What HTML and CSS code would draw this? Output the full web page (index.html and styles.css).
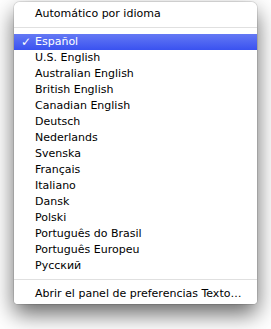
FILE: index.html
```html
<!DOCTYPE html>
<html lang="es">
    <head>
        <meta charset="UTF-8" />
        <title>Idioma</title>
        <link rel="stylesheet" href="styles.css">
    </head>
    <body>
        <div class="menu">
            <div class="menu-item">Automático por idioma</div>
            <div class="separator"></div>
            <div class="menu-item selected"><span class="check">✓</span>Español</div>
            <div class="menu-item">U.S. English</div>
            <div class="menu-item">Australian English</div>
            <div class="menu-item">British English</div>
            <div class="menu-item">Canadian English</div>
            <div class="menu-item">Deutsch</div>
            <div class="menu-item">Nederlands</div>
            <div class="menu-item">Svenska</div>
            <div class="menu-item">Français</div>
            <div class="menu-item">Italiano</div>
            <div class="menu-item">Dansk</div>
            <div class="menu-item">Polski</div>
            <div class="menu-item">Português do Brasil</div>
            <div class="menu-item">Português Europeu</div>
            <div class="menu-item">Русский</div>
            <div class="separator"></div>
            <div class="menu-item">Abrir el panel de preferencias Texto…</div>
        </div>
    </body>
</html>
```

FILE: styles.css
```css
* {
    margin: 0;
    padding: 0;
    box-sizing: border-box;
}

body {
    font-family: "DejaVu Sans", sans-serif;
    font-size: 11px;
    background: #fff;
    color: #000;
    width: 271px;
    height: 329px;
    overflow: hidden;
}

.menu {
    margin: 2px 0 0 14px;
    width: 243px;
    height: 302px;
    padding: 4px 0 2px;
    background: rgba(255, 255, 255, 0.97);
    border-radius: 6px 6px 4px 4px;
    box-shadow: 0 0 0 1px rgba(0, 0, 0, 0.1),
        0 10px 22px rgba(0, 0, 0, 0.6);
}

.menu-item {
    position: relative;
    height: 16px;
    line-height: 16px;
    padding-left: 21px;
    white-space: nowrap;
}

.menu-item.selected {
    color: #fff;
    background: linear-gradient(#6479f4, #3a52f0);
}

.check {
    position: absolute;
    left: 7px;
    top: 0;
    font-size: 12px;
    font-weight: bold;
}

.separator {
    height: 12px;
    padding-top: 5px;
}

.separator::after {
    content: "";
    display: block;
    height: 1px;
    background: #e0e0e0;
}
```
